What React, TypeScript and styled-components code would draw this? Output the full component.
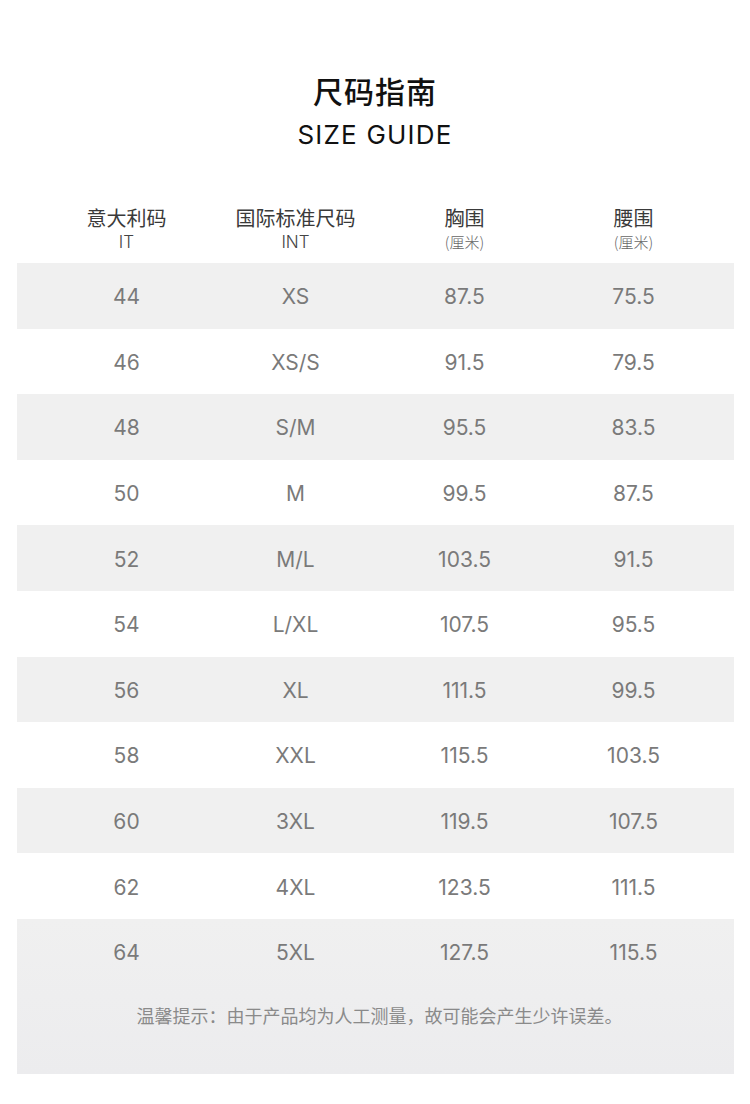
import styled, {createGlobalStyle} from 'styled-components'

const sizes = [
  ['44', 'XS', '87.5', '75.5'],
  ['46', 'XS/S', '91.5', '79.5'],
  ['48', 'S/M', '95.5', '83.5'],
  ['50', 'M', '99.5', '87.5'],
  ['52', 'M/L', '103.5', '91.5'],
  ['54', 'L/XL', '107.5', '95.5'],
  ['56', 'XL', '111.5', '99.5'],
  ['58', 'XXL', '115.5', '103.5'],
  ['60', '3XL', '119.5', '107.5'],
  ['62', '4XL', '123.5', '111.5'],
  ['64', '5XL', '127.5', '115.5'],
]

const headers = [
  {cn: '意大利码', en: 'IT', unit: false},
  {cn: '国际标准尺码', en: 'INT', unit: false},
  {cn: '胸围', en: '(厘米)', unit: true},
  {cn: '腰围', en: '(厘米)', unit: true},
]

export default function App() {
  const body = sizes.slice(0, -1)
  const last = sizes[sizes.length - 1]

  return (
    <>
      <GlobalStyle />
      <Page>
        <Title>尺码指南</Title>
        <Subtitle>SIZE GUIDE</Subtitle>

        <Table>
          <HeaderRow>
            {headers.map((h) => (
              <HeaderCell key={h.cn}>
                <HeaderCn>{h.cn}</HeaderCn>
                <HeaderEn $unit={h.unit}>{h.en}</HeaderEn>
              </HeaderCell>
            ))}
          </HeaderRow>

          {body.map((row, i) => (
            <Row key={row[0]} $shaded={i % 2 === 0}>
              {row.map((v, j) => (
                <Cell key={j}>{v}</Cell>
              ))}
            </Row>
          ))}

          {/* last row shares its grey block with the note */}
          <Footer>
            <Row>
              {last.map((v, j) => (
                <Cell key={j}>{v}</Cell>
              ))}
            </Row>
            <Note>温馨提示：由于产品均为人工测量，故可能会产生少许误差。</Note>
          </Footer>
        </Table>
      </Page>
    </>
  )
}

const GlobalStyle = createGlobalStyle`
  body {
    margin: 0;
    background: #fff;
    font-family: Inter, "Noto Sans CJK SC", sans-serif;
  }
`

const Page = styled.div`
  width: 750px;
  padding-top: 70px;
  padding-bottom: 30px;
`

const Title = styled.h1`
  margin: 0;
  text-align: center;
  font-family: "Noto Sans CJK SC", sans-serif;
  font-size: 30px;
  line-height: 40px;
  font-weight: 500;
  color: #111;
  letter-spacing: 1px;
`

const Subtitle = styled.div`
  margin-top: 7px;
  text-align: center;
  font-family: Inter, sans-serif;
  font-size: 26px;
  line-height: 36px;
  font-weight: 400;
  color: #111;
  letter-spacing: 1.2px;
`

const Table = styled.div`
  margin: 0 16px 0 17px;
`

const HeaderRow = styled.div`
  display: grid;
  grid-template-columns: repeat(4, 1fr);
  padding: 53px 16px 9px 25px;
`

const HeaderCell = styled.div`
  display: flex;
  flex-direction: column;
  align-items: center;
`

const HeaderCn = styled.div`
  font-family: "Noto Sans CJK SC", sans-serif;
  font-size: 20px;
  line-height: 24px;
  color: #3a3a3a;
`

const HeaderEn = styled.div<{$unit?: boolean}>`
  font-family: ${(p) => (p.$unit ? '"Noto Sans CJK SC", sans-serif' : 'Inter, sans-serif')};
  font-size: ${(p) => (p.$unit ? '15px' : '17px')};
  font-weight: 300;
  line-height: 24px;
  color: ${(p) => (p.$unit ? '#666' : '#444')};
`

const Row = styled.div<{$shaded?: boolean}>`
  display: grid;
  grid-template-columns: repeat(4, 1fr);
  align-items: center;
  height: 65.6px;
  padding: 0 16px 0 25px;
  background: ${(p) => (p.$shaded ? '#f0f0f0' : 'transparent')};
`

const Cell = styled.div`
  text-align: center;
  font-family: Inter, sans-serif;
  font-size: 21px;
  color: #7a7a7a;
  padding-top: 2px;
`

const Footer = styled.div`
  background: linear-gradient(#f0f0f0, #ececee);
`

const Note = styled.div`
  height: 89px;
  padding-top: 16px;
  box-sizing: border-box;
  text-align: center;
  font-family: "Noto Sans CJK SC", sans-serif;
  font-size: 18px;
  line-height: 28px;
  color: #8a8a8a;
  padding-left: 8px;
`
